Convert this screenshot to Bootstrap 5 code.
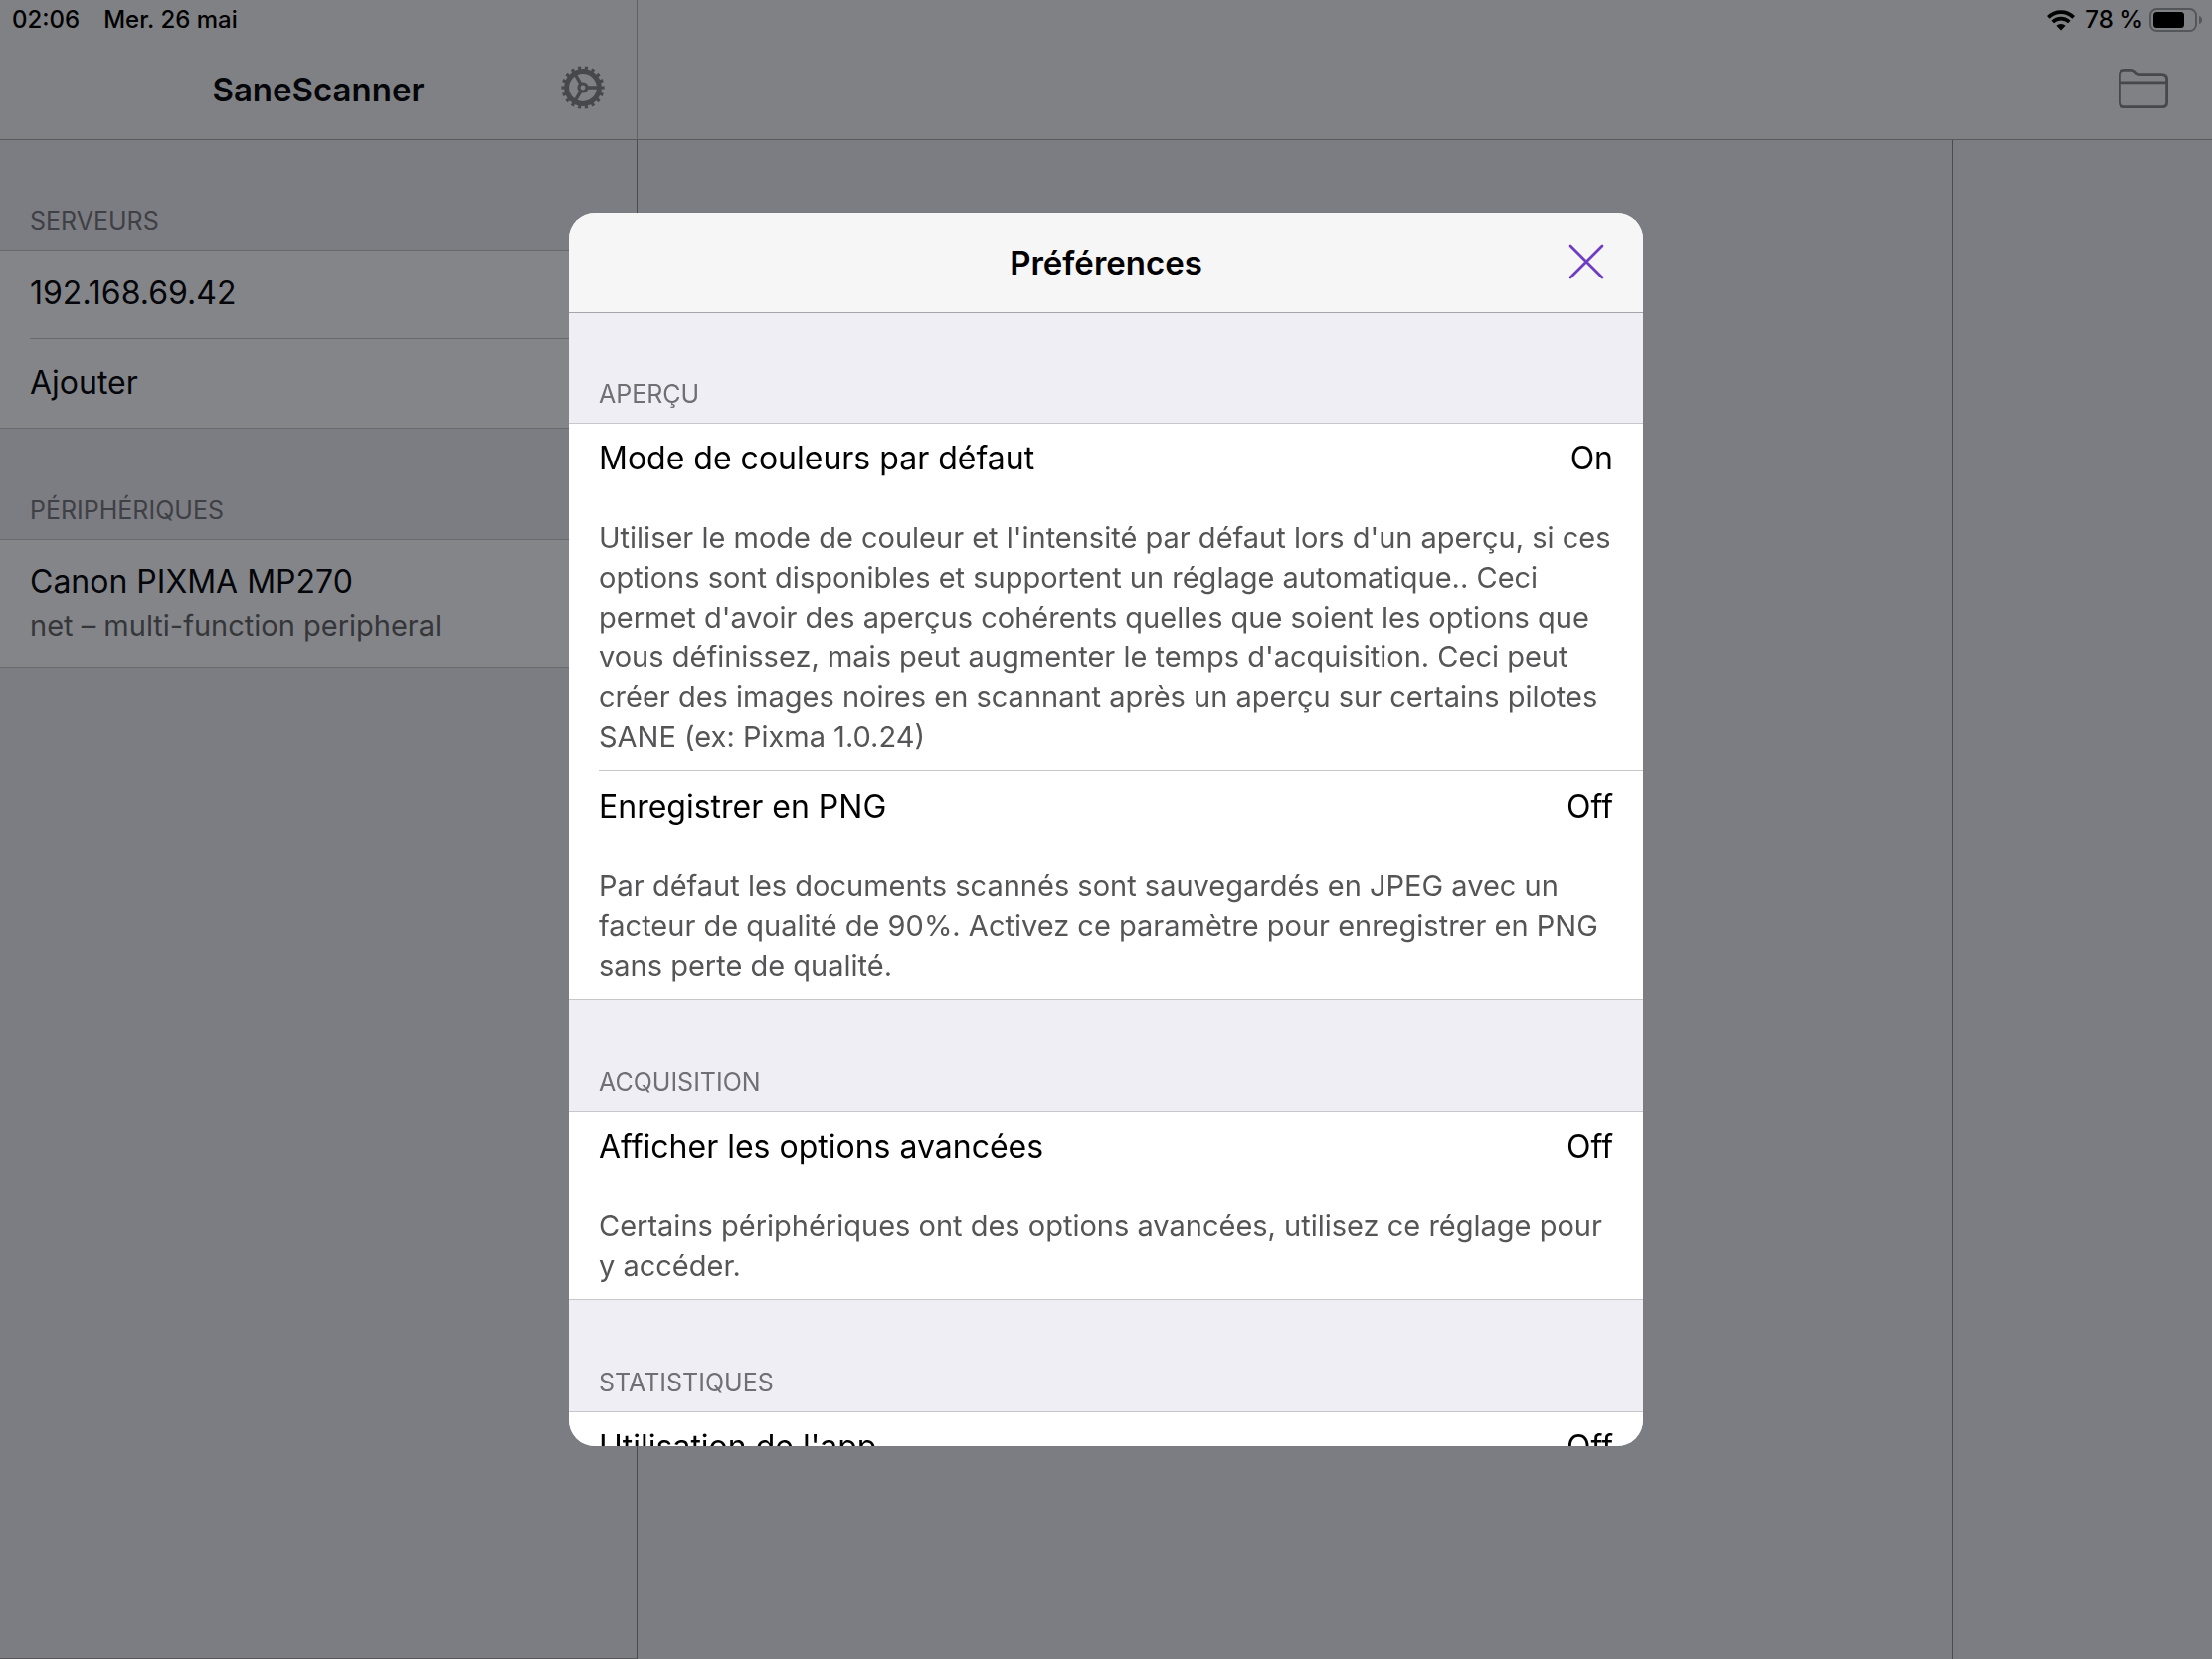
<!DOCTYPE html>
<html lang="fr">
<head>
<meta charset="utf-8">
<meta name="viewport" content="width=device-width, initial-scale=1">
<title>SaneScanner</title>
<link rel="stylesheet" href="https://cdn.jsdelivr.net/npm/bootstrap@5.3.0/dist/css/bootstrap.min.css">
<style>
  body { font-family: Inter, "Liberation Sans", sans-serif; font-size: 32px; line-height: 40px; color: #050609; background: #7c7d82; }
  .topbar { background: #808184; border-bottom: 1px solid #58595d; }
  .side-col { flex: 0 0 641px; border-right: 1px solid #4b4b4f; }
  .topbar .side-col { border-right-color: #626266; }
  .status-line { height: 40px; font-size: 24px; font-weight: 500; color: #000; padding: 0 9px 0 12px; }
  .battery-level { margin: 0 6px 0 10px; }
  .title-line { height: 100px; padding-bottom: 1px; }
  .detail-bar .title-line { padding-bottom: 3px; }
  .bar-title { font-size: 33px; line-height: 40px; font-weight: 600; }
  .bar-btn { color: #47484c; line-height: 0; }
  .side-col .bar-btn { right: 32px; top: 26px; }
  .detail-bar .bar-btn { margin-right: 44px; }
  .side-list { border-bottom: 1px solid #57575c; }
  .group-label { font-size: 25px; line-height: 32px; font-weight: 400; color: #3f4045; height: 110px; padding: 0 30px 13px; }
  .group-rows + .group-label { height: 111px; }
  .group-rows { border-top: 1px solid #68696d; border-bottom: 1px solid #68696d; background: #848589; }
  .line-row { padding: 23px 30px 25px; border: 0; background: none; color: inherit; }
  .inset-rule { margin: 0 0 1px 30px; border-top: 1px solid #68696d; }
  .device-row { padding-top: 22px; padding-bottom: 22px; }
  .note-text { font-size: 29px; line-height: 40px; color: #35363a; }
  .thumbs { flex: 0 0 261px; border-left: 1px solid #4b4b4f; }
  .prefs-dialog { max-width: 1080px; height: 100%; margin: 0 auto; padding: 214px 0; }
  .prefs-sheet { border: 0; border-radius: 26px; overflow: hidden; height: 100%; color: #000; background: #efeef4; }
  .prefs-head { height: 101px; background: #f6f6f6; border-bottom: 1px solid #a5a5a8; border-radius: 0; padding: 0; }
  .prefs-close { right: 33px; top: 25px; color: #6f3dc4; line-height: 0; padding: 6px; }
  .prefs-body { padding: 0; overflow: hidden; }
  .prefs-body .group-label { color: #6f6f74; }
  .prefs-body .group-rows + .group-label { height: 112px; }
  .prefs-body .group-rows { background: #fff; border-color: #c7c7ca; }
  .prefs-body .inset-rule { border-color: #c7c7ca; }
  .pref-row { padding: 15px 30px 13px; border: 0; background: none; color: inherit; }
  .prefs-body .note-text { color: #555557; margin-top: 40px; }
</style>
</head>
<body class="vh-100 overflow-hidden d-flex flex-column">
<header class="topbar d-flex">
  <div class="side-col">
    <div class="status-line d-flex align-items-center gap-4"><span>02:06</span><span>Mer. 26 mai</span></div>
    <div class="title-line position-relative d-flex justify-content-center align-items-center">
      <h1 class="bar-title m-0">SaneScanner</h1>
      <button type="button" class="bar-btn btn p-0 border-0 position-absolute" aria-label="Réglages">
        <svg width="44" height="44" viewBox="-22 -22 44 44" fill="none" stroke="currentColor">
          <circle r="16.4" stroke-width="5"/>
          <circle r="19.8" stroke-width="3.6" pathLength="180" stroke-dasharray="4.6 5.4" stroke-dashoffset="2.3"/>
          <circle r="4" stroke-width="3.2"/>
          <path d="M5 0H15M-2.5 -4.3L-7.5 -13M-2.5 4.3L-7.5 13" stroke-width="3.4"/>
        </svg>
      </button>
    </div>
  </div>
  <div class="detail-bar flex-grow-1">
    <div class="status-line d-flex align-items-center justify-content-end">
      <svg width="28" height="21" viewBox="0 0 28 21" fill="none" stroke="#000">
        <path d="M1.3 7.4A18 18 0 0 1 26.7 7.4" stroke-width="3.8"/>
        <path d="M5.7 12A11.8 11.8 0 0 1 22.3 12" stroke-width="3.6"/>
        <path d="M14 20.5L9.4 15.8A6.5 6.5 0 0 1 18.6 15.8Z" fill="#000" stroke="none"/>
      </svg>
      <span class="battery-level">78 %</span>
      <svg width="54" height="24" viewBox="0 0 54 24">
        <rect x="1" y="1" width="46" height="22" rx="6.5" fill="none" stroke="#55565a" stroke-width="2"/>
        <rect x="4" y="4" width="31" height="16" rx="3.5" fill="#000"/>
        <path d="M50 8C54 9 54 15 50 16Z" fill="#55565a"/>
      </svg>
    </div>
    <div class="title-line d-flex justify-content-end align-items-center">
      <button type="button" class="bar-btn btn p-0 border-0" aria-label="Documents">
        <svg width="50" height="40" viewBox="0 0 50 40" fill="none" stroke="currentColor" stroke-width="2.8">
          <path d="M1.4 34V6Q1.4 1.4 6 1.4H13Q15 1.4 16.5 2.8L18.3 4.5Q19.5 5.6 21.5 5.6H43.5Q48.6 5.6 48.6 10.5V34Q48.6 38.6 44 38.6H6Q1.4 38.6 1.4 34ZM1.4 13.8H48.6"/>
        </svg>
      </button>
    </div>
  </div>
</header>

<main class="d-flex flex-grow-1">
  <nav class="side-col side-list" aria-label="Scanners">
    <h2 class="group-label d-flex align-items-end m-0">SERVEURS</h2>
    <div class="group-rows">
      <button type="button" class="line-row d-block w-100 text-start">192.168.69.42</button>
      <div class="inset-rule"></div>
      <button type="button" class="line-row d-block w-100 text-start">Ajouter</button>
    </div>
    <h2 class="group-label d-flex align-items-end m-0">PÉRIPHÉRIQUES</h2>
    <div class="group-rows">
      <button type="button" class="line-row device-row d-block w-100 text-start">
        <span class="d-block">Canon PIXMA MP270</span>
        <span class="note-text d-block pt-1">net – multi-function peripheral</span>
      </button>
    </div>
  </nav>
  <section class="flex-grow-1"></section>
  <aside class="thumbs"></aside>
</main>

<div class="modal show d-block overflow-hidden" role="dialog" aria-modal="true" aria-labelledby="prefsTitle">
  <div class="modal-dialog prefs-dialog">
    <div class="modal-content prefs-sheet">
      <div class="modal-header prefs-head position-relative flex-shrink-0 justify-content-center">
        <h2 class="bar-title m-0" id="prefsTitle">Préférences</h2>
        <button type="button" class="prefs-close btn border-0 position-absolute" aria-label="Fermer">
          <svg width="36" height="36" viewBox="0 0 36 36" fill="none" stroke="currentColor" stroke-width="2.8" stroke-linecap="round"><path d="M2 2L34 34M34 2L2 34"/></svg>
        </button>
      </div>
      <div class="modal-body prefs-body">
        <h3 class="group-label d-flex align-items-end m-0">APERÇU</h3>
        <div class="group-rows">
          <button type="button" class="pref-row d-block w-100 text-start">
            <span class="d-flex justify-content-between"><span>Mode de couleurs par défaut</span><span>On</span></span>
            <span class="note-text d-block">Utiliser le mode de couleur et l'intensité par défaut lors d'un aperçu, si ces options sont disponibles et supportent un réglage automatique.. Ceci permet d'avoir des aperçus cohérents quelles que soient les options que vous définissez, mais peut augmenter le temps d'acquisition. Ceci peut créer des images noires en scannant après un aperçu sur certains pilotes SANE (ex: Pixma 1.0.24)</span>
          </button>
          <div class="inset-rule"></div>
          <button type="button" class="pref-row d-block w-100 text-start">
            <span class="d-flex justify-content-between"><span>Enregistrer en PNG</span><span>Off</span></span>
            <span class="note-text d-block">Par défaut les documents scannés sont sauvegardés en JPEG avec un facteur de qualité de 90%. Activez ce paramètre pour enregistrer en PNG sans perte de qualité.</span>
          </button>
        </div>
        <h3 class="group-label d-flex align-items-end m-0">ACQUISITION</h3>
        <div class="group-rows">
          <button type="button" class="pref-row d-block w-100 text-start">
            <span class="d-flex justify-content-between"><span>Afficher les options avancées</span><span>Off</span></span>
            <span class="note-text d-block">Certains périphériques ont des options avancées, utilisez ce réglage pour y accéder.</span>
          </button>
        </div>
        <h3 class="group-label d-flex align-items-end m-0">STATISTIQUES</h3>
        <div class="group-rows">
          <button type="button" class="pref-row d-block w-100 text-start">
            <span class="d-flex justify-content-between"><span>Utilisation de l'app</span><span>Off</span></span>
          </button>
        </div>
      </div>
    </div>
  </div>
</div>
<script src="https://cdn.jsdelivr.net/npm/bootstrap@5.3.0/dist/js/bootstrap.bundle.min.js"></script>
</body>
</html>
